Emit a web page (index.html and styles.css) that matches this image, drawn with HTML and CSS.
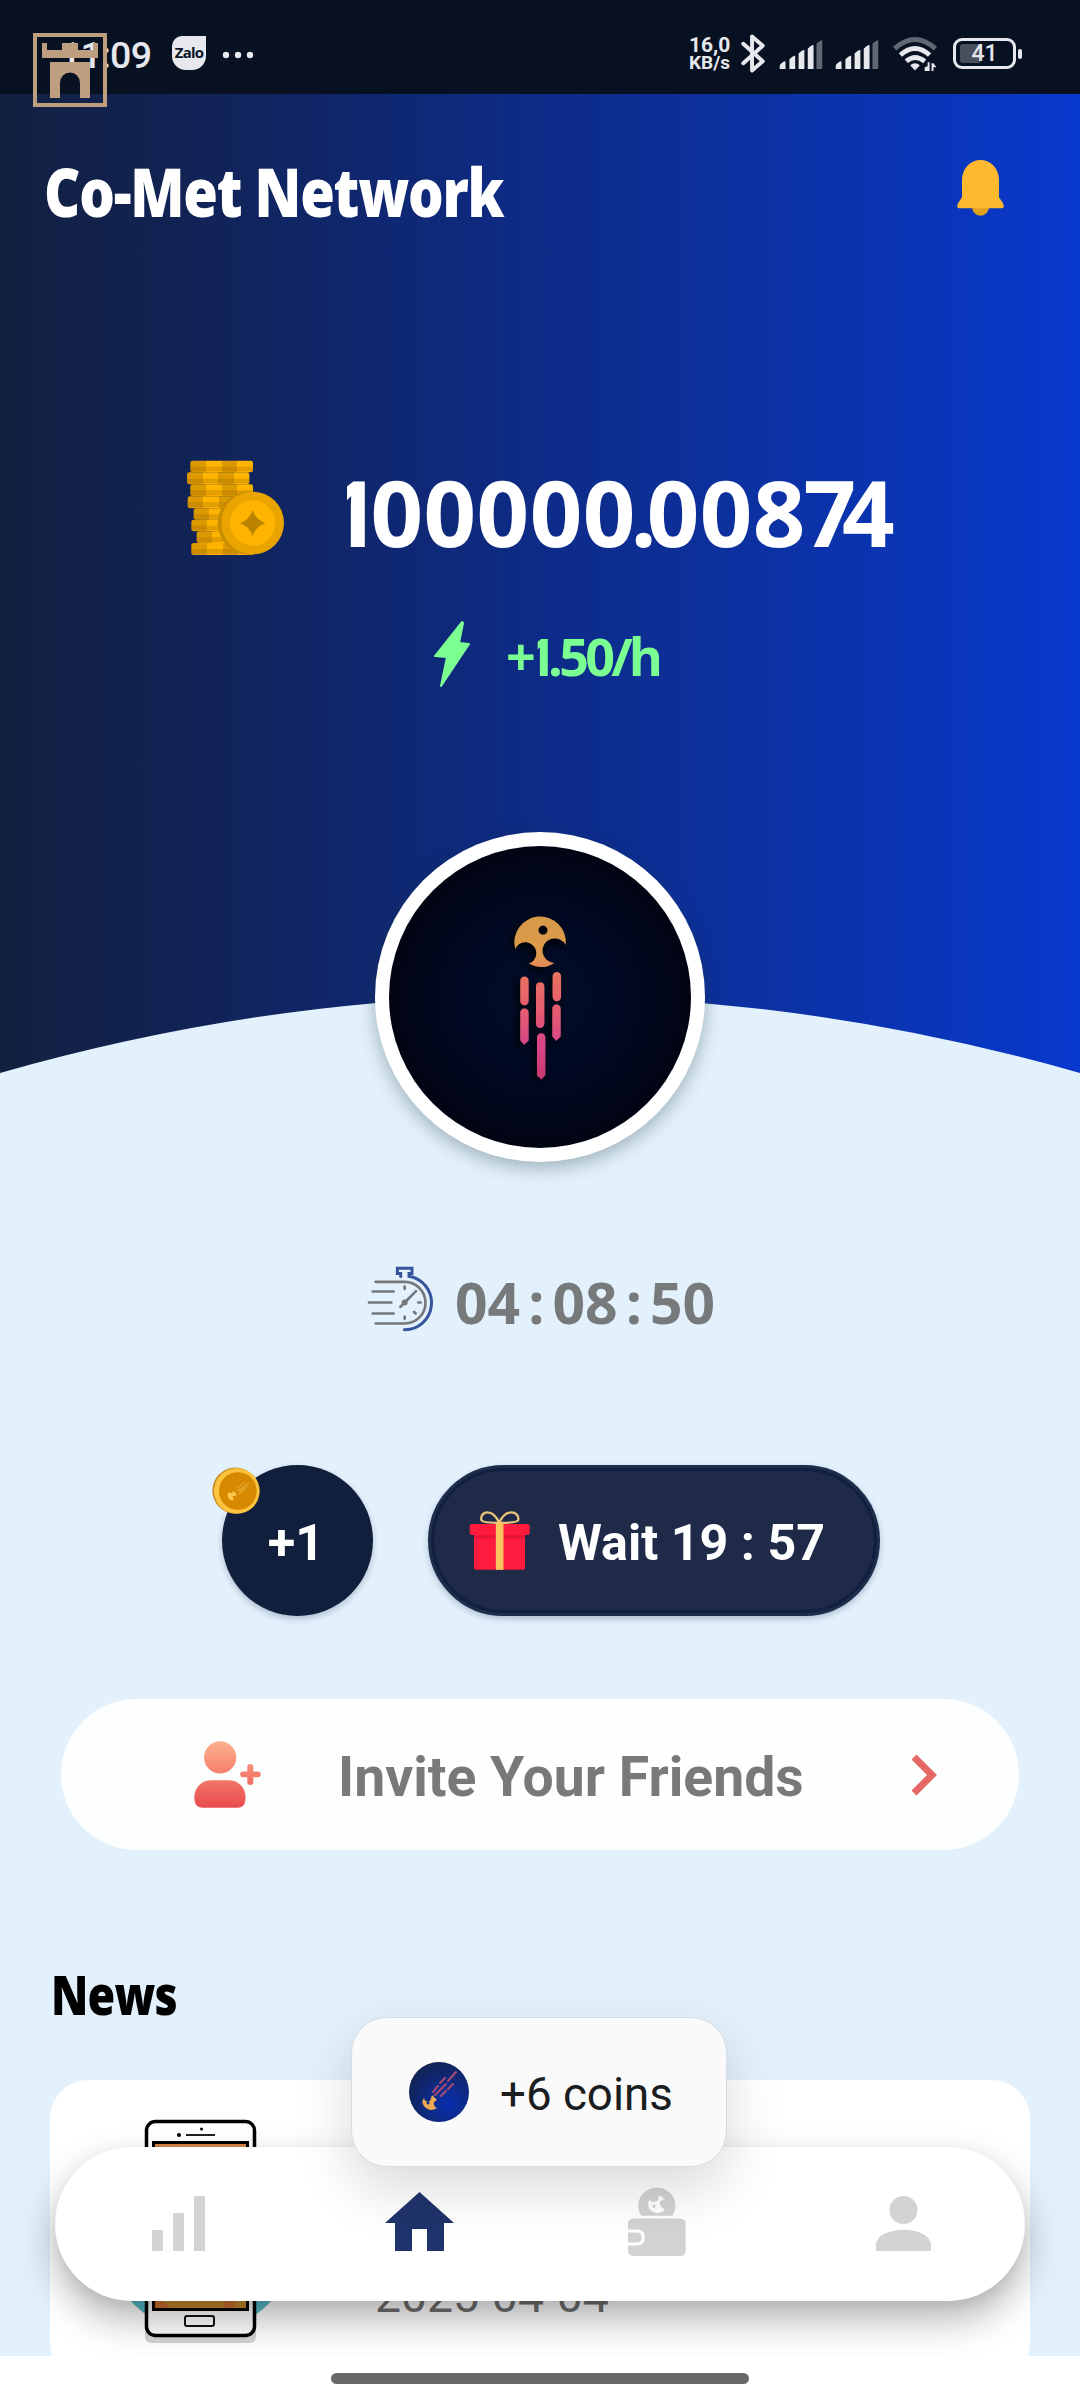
FILE: index.html
```html
<!DOCTYPE html>
<html lang="en">
<head>
<meta charset="utf-8">
<title>Co-Met Network</title>
<link rel="stylesheet" href="styles.css">
</head>
<body>
<div class="screen">
  <header class="status">
    <div class="status-left">
      <span class="clock">11:09</span>
      <span class="zalo">Zalo</span>
      <svg class="dots" viewBox="0 0 32 8"><circle cx="4" cy="4" r="3.2"/><circle cx="16" cy="4" r="3.2"/><circle cx="28" cy="4" r="3.2"/></svg>
    </div>
    <div class="status-right">
      <div class="rate-net"><span>16,0</span><span class="unit">KB/s</span></div>
      <svg class="bt" viewBox="0 0 24 40"><path d="M2 10 22 28 11 37.5V2.500L22 12 2 30" fill="none" stroke="#e6e8ed" stroke-width="4" stroke-linejoin="round" stroke-linecap="round"/></svg>
      <svg class="sig" viewBox="0 0 44 30"><path d="M0 30v-4q3-4 6-4v8zM10 30V20q3-3.500 6-4v14zM19.500 30V14q3-3.500 6-4v20zM29 30V9q3-3.500 6-4v25z"/><path opacity=".4" d="M38 30V4q3-3.500 6-4v30z"/></svg>
      <svg class="sig" viewBox="0 0 44 30"><path d="M0 30v-4q3-4 6-4v8zM10 30V20q3-3.500 6-4v14zM19.500 30V14q3-3.500 6-4v20zM29 30V9q3-3.500 6-4v25z"/><path opacity=".4" d="M38 30V4q3-3.500 6-4v30z"/></svg>
      <svg class="wifi" viewBox="0 0 46 36"><g fill="none" stroke="#e6e8ed" stroke-width="5"><path opacity=".4" d="M2 12Q23-7 44 12"/><path d="M8 18.500Q23 5 38 18.500"/><path d="M14 25Q23 17 33 25"/></g><path d="M18 29q5-4 10 0l-5 5.500z"/><path d="M33 35v-4l3-1v-4h2v9zM40 35v-8h2l3 4h-3v4z"/></svg>
      <div class="battery"><i></i><span>41</span></div>
    </div>
    <svg class="castle" viewBox="0 0 74 74"><path fill="none" stroke="#bd9f80" stroke-width="4" d="M2 2h70v70H2z"/><path fill="#bd9f80" d="M9 10h5v7h15v-7h16v7h15v-7h5v15H9zM17 29h40v36H47V50a10 10.500 0 0 0-20 0v15H17z"/></svg>
  </header>

  <section class="hero">
    <div class="topbar">
      <h1>Co-Met Network</h1>
      <svg class="bell" viewBox="0 0 47 57" preserveAspectRatio="none"><path fill="#dfa220" d="M15 46h17c1 14-18 14-17 0z"/><path fill="#ffb92e" d="M5 20a18.500 20 0 0 1 37 0v18l4 6q2 5-1 5H2q-3 0-1-5l4-6z"/></svg>
    </div>
    <div class="balance">
      <svg class="coins" viewBox="30 32 300 288">
        <defs><linearGradient id="coin"><stop offset=".25" stop-color="#dc9a00"/><stop offset=".25" stop-color="#ffb400"/><stop offset=".5" stop-color="#ffb400"/><stop offset=".5" stop-color="#dc9a00"/><stop offset=".75" stop-color="#dc9a00"/><stop offset=".75" stop-color="#ffb400"/></linearGradient></defs>
        <g fill="url(#coin)"><rect x="43" y="34" width="188" height="35" rx="7"/><rect x="33" y="69" width="187" height="36" rx="7"/><rect x="43" y="105" width="188" height="36" rx="7"/><rect x="35" y="141" width="188" height="36" rx="7"/><rect x="53" y="177" width="188" height="34" rx="7"/><rect x="46" y="211" width="188" height="35" rx="7"/><rect x="62" y="246" width="180" height="35" rx="7"/><rect x="46" y="281" width="188" height="36" rx="7"/></g>
        <g fill="#a66d00" opacity=".32"><path d="M43 52h188v14H43zM33 88h187v14H33zM43 123h188v15H43zM35 159h150v15H35zM53 195h100v13H53zM46 229h100v14H46zM62 264h100v14H62zM46 299h188v15H46z"/></g>
        <path fill="#c98c00" d="M220 126a95 95 0 0 0 0 190h10V126z"/><circle cx="230" cy="221" r="94" fill="#e9a400"/><circle cx="230" cy="221" r="68" fill="#ffb400"/><path fill="#bc8300" d="M230 182q9 29 38 40-29 10-38 39-9-29-38-39 29-11 38-40z"/>
      </svg>
      <span class="amount"><span class="one">1</span>0000<span class="last">0</span><span class="dot">.</span>00<span class="eight">8</span><span class="seven">7</span>4</span>
    </div>
    <div class="speed">
      <svg class="bolt" viewBox="0 0 36 66"><path fill="#7cff92" stroke="#7cff92" stroke-width="2" stroke-linejoin="round" d="M28 1 1 35l12 1-6 29 28-42-10-1 4-20z"/></svg>
      <span class="perhour"><span class="plus">+</span><span class="one">1</span><span class="dot">.</span>50/h</span>
    </div>
    <svg class="curve" viewBox="0 0 1080 80" preserveAspectRatio="none"><path fill="#e3f1fd" d="M0 77Q540-77 1080 77V80H0z"/></svg>
    <div class="avatar">
      <svg viewBox="148 138 904 904">
        <defs>
          <radialGradient id="space"><stop offset="0" stop-color="#020d28"/><stop offset=".55" stop-color="#010922"/><stop offset="1" stop-color="#010412"/></radialGradient>
          <linearGradient id="tail" gradientUnits="userSpaceOnUse" x1="0" y1="345" x2="0" y2="835"><stop offset="0" stop-color="#d59a48"/><stop offset=".25" stop-color="#df9a4c"/><stop offset=".38" stop-color="#e96f62"/><stop offset=".6" stop-color="#e45a70"/><stop offset=".8" stop-color="#d8458a"/><stop offset="1" stop-color="#c83a6c"/></linearGradient>
          <filter id="glow" x="-50%" y="-20%" width="200%" height="140%"><feDropShadow dx="-8" dy="10" stdDeviation="12" flood-color="#000"/></filter>
        </defs>
        <circle cx="600" cy="590" r="460" fill="url(#space)"/>
        <g filter="url(#glow)" fill="url(#tail)" stroke="none">
          <path fill-rule="evenodd" d="M526 446A77 77 0 1 1 677 434A37 37 0 1 0 643 488Q605 512 567 490A33 33 0 1 0 526 446ZM595 390a14 14 0 1 0 28 0 14 14 0 1 0-28 0z"/>
          <path d="M541 541a12.500 12.500 0 0 1 25 0v61a12.500 12.500 0 0 1-25 0zM541 637a12.500 12.500 0 0 1 25 0v83l-13 13-12-13zM588 558a12.500 12.500 0 0 1 25 0v112a12.500 12.500 0 0 1-25 0zM638 528a12.500 12.500 0 0 1 25 0v62a12.500 12.500 0 0 1-25 0zM637 625a12.500 12.500 0 0 1 25 0v83l-13 13-12-13zM591 711a12.500 12.500 0 0 1 25 0v113l-12 13-13-13z"/>
        </g>
      </svg>
    </div>
  </section>

  <main class="content">
    <div class="timer">
      <svg class="watch" viewBox="82 78 198 197"><g fill="none" stroke="#74787b" stroke-width="8" stroke-linecap="round"><path d="M105 125h87a62 62 0 0 1 0 125h-87M96 154h63M85 187h67M96 220h63M192 187l34-34M192 187l-13 13M192 139v7M192 229v7M233 187h7M220 215l5 5"/></g><circle cx="192" cy="187" r="9" fill="#74787b"/><path fill="none" stroke="#35549b" stroke-width="9" stroke-linecap="round" d="M191 269a80 81 0 0 0 14-161v-8h9V84h-44v16h10v9"/></svg>
      <span class="time">04<span class="colon">:</span>08<span class="colon">:</span>50</span>
    </div>

    <div class="actions">
      <div class="plus-one">+1
        <svg class="mini-coin" viewBox="36 50 145 144"><circle cx="107" cy="121" r="70" fill="#c58d27"/><circle cx="111" cy="122" r="69" fill="#fdc33d"/><circle cx="114" cy="122" r="57" fill="#d58800"/><path fill="#fdc648" d="M88 124q5 8 10 4l-1-5 9 3q5 7 2 12l-7-2q-5 3 1 12-8 7-15-3-8-10 1-21z"/><path stroke="#f5bd48" stroke-width="2.500" stroke-linecap="round" d="M109 114l24-17M112 122l35-25M119 123l24-16M117 131l21-15"/></svg>
      </div>
      <div class="wait">
        <svg class="gift" viewBox="806 182 184 180"><g fill="none" stroke="#e9c37c" stroke-width="7"><path d="M897 217c-20-45-57-36-54-9q3 10 54 9zM897 217c20-45 60-36 58-9q-3 10-58 9z"/></g><rect x="821" y="240" width="154" height="119" rx="6" fill="#ff1b3d"/><rect x="808" y="221" width="181" height="33" rx="6" fill="#ff1b3d"/><path fill="#e51638" d="M821 255h154v10H821z"/><path fill="#fcc45d" d="M887 216h23v143h-23z"/></svg>
        <span>Wait 19 : 57</span>
      </div>
    </div>

    <div class="invite">
      <svg class="friend" viewBox="42 62 200 200"><defs><linearGradient id="coral" gradientUnits="userSpaceOnUse" x1="0" y1="62" x2="0" y2="262"><stop offset="0" stop-color="#fdb18d"/><stop offset="1" stop-color="#e94b4e"/></linearGradient></defs><g fill="url(#coral)"><circle cx="120" cy="111" r="48"/><path d="M43 232c0-31 20-53 52-53h49c32 0 52 22 52 53q0 29-22 29H66q-23 0-23-29z"/><path d="M201 153v-14q0-8 9-8t9 8v14h14q8 0 8 8.500t-8 8.500h-14v15q0 8-9 8t-9-8v-15h-13q-8 0-8-8.500t8-8.500z"/></g></svg>
      <span class="invite-text">Invite Your Friends</span>
      <svg class="chev" viewBox="0 0 26 42"><path d="M3 3l18 18L3 39" fill="none" stroke="#e56865" stroke-width="7"/></svg>
    </div>

    <h2>News</h2>
    <article class="news">
      <svg class="thumb" viewBox="0 0 140 240">
        <defs><linearGradient id="orange" x2="0" y2="1"><stop offset="0" stop-color="#d9864a"/><stop offset="1" stop-color="#c98a2c"/></linearGradient></defs>
        <circle cx="71" cy="123" r="95" fill="#57bccb"/><rect x="15" y="20" width="111" height="209" rx="6" fill="#d3d3d3"/><rect x="16.500" y="7.500" width="108" height="214" rx="9" fill="#fff" stroke="#000" stroke-width="3.500"/><path d="M23.500 28.500h94v167h-94z" fill="url(#orange)" stroke="#000" stroke-width="3"/><path fill="#cf702f" d="M25 180l15 14H25zM96 186l10-3-3 11H93z"/><path d="M56 21h29" stroke="#222" stroke-width="2"/><circle cx="49" cy="21" r="2"/><circle cx="71.500" cy="15" r="1.500"/><rect x="55" y="202" width="29" height="10" rx="2" fill="none" stroke="#111" stroke-width="2"/>
      </svg>
      <time>2025-04-04</time>
    </article>

    <nav>
      <svg viewBox="0 0 53 55"><path d="M0 34h11v21H0zM21 17h11v38H21zM42 0h11v55H42z"/></svg>
      <svg class="home" viewBox="0 0 69 59"><path d="M34.500 0 69 31H59v28H42V37H27v22H10V31H0z"/></svg>
      <svg class="wallet" viewBox="257 735 168 214" preserveAspectRatio="none"><path d="M296 828a54 54 0 1 1 89 0z"/><rect x="257" y="836" width="167" height="113" rx="16"/><path fill="none" stroke="#fff" stroke-width="9" d="M257 874h26q18 0 18 19t-18 20h-26"/><path fill="#fff" fill-rule="evenodd" d="M319 779q5 10 18 6 11-3 8-18 12 2 18 11-16 4-14 15 2 10 15 15-10 14-28 11-16-5-20-20-1-11 3-20zM327 799a5 5 0 1 0 10 0 5 5 0 1 0-10 0z"/></svg>
      <svg class="user" viewBox="0 0 55 55"><circle cx="27.500" cy="14" r="14"/><path d="M0 55V48C3 29 52 29 55 48v7z"/></svg>
    </nav>

    <div class="toast">
      <svg viewBox="0 0 60 62"><defs><radialGradient id="blue" cx=".65" cy=".7" r=".75"><stop offset="0" stop-color="#0a2fae"/><stop offset="1" stop-color="#122352"/></radialGradient></defs><circle cx="30" cy="31" r="30" fill="url(#blue)"/><path fill="#efa954" fill-rule="evenodd" d="M15 37q1 5 6 3l2-6 5 5-3 2q-1 4 3 6-6 4-11 0-6-5-2-10zM17.500 42a1.500 1.500 0 1 0 3 0 1.500 1.500 0 1 0-3 0z"/><path stroke="#a84c72" stroke-width="2" stroke-linecap="round" d="M24 31l5-6M31 22l5-5M26 34l11-11M39 20l8-9M32 35l5-5M39 28l5-5"/></svg>
      <span>+6 coins</span>
    </div>
  </main>
  <footer><div class="homebar"></div></footer>
</div>
</body>
</html>
```
FILE: styles.css
```css
* { box-sizing: border-box; margin: 0; padding: 0; }
body { width: 1080px; height: 2400px; font-family: Roboto, "Liberation Sans", sans-serif; background: #fff; overflow: hidden; }
svg { display: block; flex: none; overflow: visible; }
.screen { width: 1080px; height: 2400px; display: flex; flex-direction: column; }

.status { position: relative; height: 94px; flex: none; background: #081122; color: #e6e8ed; display: flex; justify-content: space-between; padding: 0 58px 0 60px; z-index: 2; }
.status svg { fill: #e6e8ed; }
.status-left { display: flex; align-items: center; padding-top: 15px; height: 94px; }
.clock { width: 112px; font-size: 37.500px; font-weight: 500; line-height: 40px; letter-spacing: -.8px; }
.zalo { width: 34px; height: 34px; margin-top: -3px; border-radius: 10px 0 14px 14px; background: #e6e8ed; color: #0a1428; font: 700 15px/32px "Open Sans", sans-serif; text-align: center; letter-spacing: -.8px; }
.dots { width: 32px; height: 8px; margin-left: 16px; }
.status-right { display: flex; align-items: center; padding-top: 13px; height: 94px; }
.rate-net { width: 42px; margin-right: 10px; display: flex; flex-direction: column; font-size: 21px; font-weight: 700; line-height: 18px; }
.rate-net .unit { font-size: 19px; line-height: 18px; }
.bt { width: 24px; height: 39px; margin-right: 14px; }
.sig { width: 44px; height: 29px; margin: 2px 12px 0 0; }
.wifi { width: 46px; height: 35px; margin: 2px 15px 0 1px; }
.battery { position: relative; width: 63px; height: 31px; border: 3px solid #e6e8ed; border-radius: 9px; text-align: center; font-size: 23px; font-weight: 500; line-height: 26px; margin-right: 6px; }
.battery i { position: absolute; left: 4px; top: 3px; width: 20px; height: 19px; border-radius: 3px 0 0 3px; background: #4a4f5d; }
.battery span { position: relative; }
.battery::after { content: ""; position: absolute; right: -9px; top: 8px; width: 4px; height: 10px; border-radius: 2px; background: #e6e8ed; }
.castle { position: absolute; left: 33px; top: 33px; width: 74px; height: 74px; }

.hero { position: relative; height: 982px; flex: none; background: linear-gradient(90deg, #12203f 0%, #11245c 22%, #0e2a80 45%, #0b32a8 75%, #0839cd 100%); display: flex; flex-direction: column; z-index: 1; }
.topbar { flex: none; display: flex; justify-content: space-between; align-items: center; height: 190px; padding: 0 76px 0 44px; }
h1 { width: 560px; margin-top: 3px; color: #fff; font: 800 68px/90px "Open Sans", sans-serif; letter-spacing: -1.500px; white-space: nowrap; transform: scaleX(.825); transform-origin: left; }
.bell { width: 47px; height: 56px; margin-top: -3px; }
.balance { flex: none; display: flex; align-items: center; height: 100px; margin-top: 174px; padding-left: 186px; }
.coins { width: 100px; height: 96px; }
.amount { margin: 7px 0 0 61px; color: #fff; font: 700 92px/100px "Open Sans", sans-serif; letter-spacing: .5px; white-space: nowrap; }
.one { display: inline-block; clip-path: inset(0 -10px 0 .22em); }
.amount .one { margin-left: -.22em; letter-spacing: -9px; }
.amount .last { letter-spacing: -5px; }
.amount .dot { letter-spacing: -10px; }
.amount .eight { letter-spacing: -2px; }
.amount .seven { letter-spacing: -14px; }
.speed { flex: none; display: flex; align-items: center; height: 70px; margin-top: 61px; padding-left: 434px; color: #7cff92; }
.bolt { width: 36px; height: 66px; }
.perhour { margin: 3px 0 0 36px; font: 700 52px/70px "Open Sans", sans-serif; letter-spacing: -3.800px; white-space: nowrap; }
.perhour .plus { letter-spacing: -9.500px; }
.perhour .one { letter-spacing: -8px; }
.perhour .dot { letter-spacing: -3.500px; }
.curve { width: 1080px; height: 80px; margin-top: auto; }
.avatar { position: absolute; left: 375px; top: 738px; width: 330px; height: 330px; padding: 14px; border-radius: 50%; background: #fff; box-shadow: 0 6px 18px rgba(30, 60, 60, .35); z-index: 2; }
.avatar svg { width: 302px; height: 302px; border-radius: 50%; overflow: hidden; }

.content { position: relative; height: 1280px; flex: none; overflow: hidden; background: #e3f1fd; display: flex; flex-direction: column; }
.timer { flex: none; display: flex; align-items: center; height: 70px; margin-top: 188px; padding-left: 368px; }
.watch { width: 66px; height: 66px; }
.time { margin: 6px 0 0 21px; color: #777a7b; font: 700 57px/70px "Open Sans", sans-serif; white-space: nowrap; }
.colon { margin: 0 8px; }
.actions { flex: none; display: flex; gap: 55px; margin-top: 131px; padding-left: 222px; height: 151px; }
.plus-one, .wait { height: 151px; color: #fff; font-weight: 700; font-size: 50.500px; line-height: 155px; box-shadow: 0 3px 6px rgba(20, 40, 70, .25); }
.plus-one { position: relative; width: 151px; border-radius: 50%; background: #111f3d; text-align: center; padding-right: 3px; }
.mini-coin { position: absolute; left: -10px; top: 2px; width: 48px; height: 48px; }
.wait { width: 452px; border-radius: 76px; background: #1e2a47; border: 3px solid #1e2d4c; box-shadow: inset 0 0 0 3px #11203f, 0 3px 6px rgba(20, 40, 70, .25); display: flex; align-items: center; padding-left: 38px; }
.gift { width: 61px; height: 60px; }
.wait span { margin: 3px 0 0 28px; white-space: nowrap; font-size: 50.200px; }
.invite { flex: none; display: flex; align-items: center; margin: 83px 61px 0; height: 151px; border-radius: 76px; background: #fdfefe; padding-left: 133px; }
.friend { width: 67px; height: 67px; }
.invite-text { width: 569px; margin: 7px 0 0 77px; color: #797979; font-size: 55.300px; font-weight: 700; line-height: 70px; white-space: nowrap; }
.chev { width: 26px; height: 42px; margin-left: 4px; }
h2 { flex: none; margin: 104px 0 0 51px; width: 160px; height: 80px; color: #000; font: 800 55px/80px "Open Sans", sans-serif; letter-spacing: -1px; transform: scaleX(.815); transform-origin: left; }
.news { flex: none; margin: 46px 50px 0; height: 302px; border-radius: 38px; background: #fff; display: flex; align-items: flex-start; padding: 34px 0 0 80px; }
.thumb { width: 140px; height: 240px; }
time { margin: 155px 0 0 105px; color: #707070; font-size: 46.300px; line-height: 54px; white-space: nowrap; }
nav { position: absolute; left: 55px; top: 1071px; width: 970px; height: 154px; border-radius: 77px; background: #fff; box-shadow: 0 18px 38px rgba(0, 0, 0, .3), 0 5px 12px rgba(0, 0, 0, .05); fill: #d3d3d3; display: flex; align-items: flex-start; padding: 49px 0 0 97px; }
nav svg { width: 53px; height: 55px; }
nav .home { width: 69px; height: 59px; margin: -4px 0 0 180px; fill: #1f346c; }
nav .wallet { width: 58px; height: 71px; margin: -11px 0 0 174px; }
nav .user { width: 55px; margin-left: 190px; }
.toast { position: absolute; left: 351px; top: 941px; width: 376px; height: 150px; border-radius: 36px; border: 1px solid #d8dce0; background: #fafafb; box-shadow: 0 22px 55px rgba(0, 0, 0, .15); display: flex; align-items: center; padding-left: 57px; }
.toast svg { width: 60px; height: 62px; }
.toast span { margin: 5px 0 0 31px; color: #1b1e21; font-size: 45.700px; line-height: 60px; white-space: nowrap; }
footer { height: 44px; flex: none; background: #fff; display: flex; justify-content: center; padding-top: 17px; }
.homebar { width: 418px; height: 11px; border-radius: 6px; background: #696969; }
```
